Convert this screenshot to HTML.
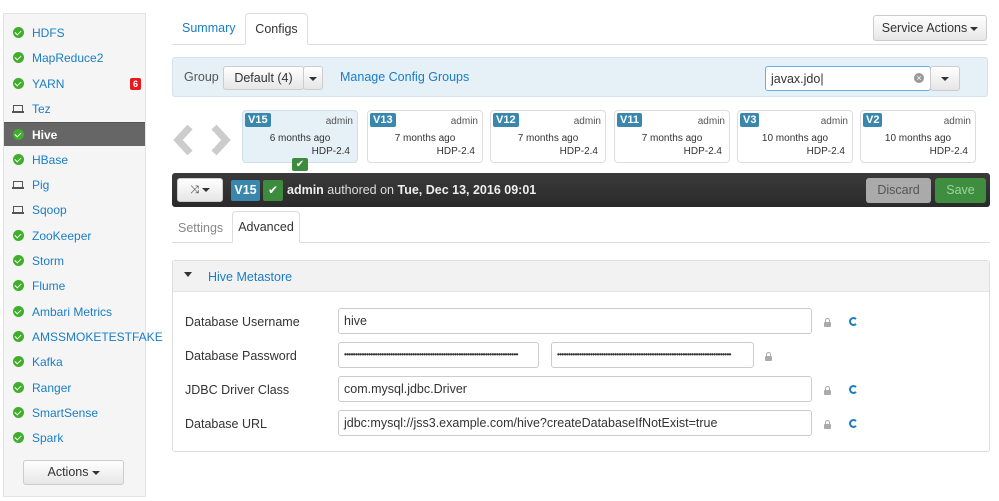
<!DOCTYPE html>
<html><head><style>
*{box-sizing:border-box;margin:0;padding:0}
body{width:999px;height:501px;background:#fff;font-family:"Liberation Sans",sans-serif;font-size:12px;color:#333;position:relative;overflow:hidden}
.a{position:absolute}
.side{left:3px;top:13px;width:143px;height:484px;background:#f5f5f5;border:1px solid #e3e3e3}
.it{position:absolute;left:0;width:141px;height:24px;line-height:24px;color:#1a7dc6;font-size:12px;padding-left:28px;white-space:nowrap}
.it .ok{position:absolute;left:9px;top:6px;width:11px;height:11px;border-radius:50%;background:#3fae29}
.it .ok:after{content:"";position:absolute;left:3px;top:2px;width:3px;height:5px;border:solid #fff;border-width:0 1.6px 1.6px 0;transform:rotate(45deg)}
.it .lp{position:absolute;left:8px;top:8px;width:12px;height:8px}
.it .lp:before{content:"";position:absolute;left:1px;top:0;width:8px;height:6px;border:1.3px solid #555}
.it .lp:after{content:"";position:absolute;left:0;top:6px;width:12px;height:1.5px;background:#555}
.btn{position:absolute;border:1px solid #ccc;border-radius:3px;background:linear-gradient(#fff,#e6e6e6);text-align:center;color:#333;font-size:12.5px}
.car{display:inline-block;width:0;height:0;border-left:4px solid transparent;border-right:4px solid transparent;border-top:4px solid #333;vertical-align:middle;margin-left:3px}
.ver{position:absolute;top:110px;width:116px;height:53px;border:1px solid #ddd;border-radius:4px;background:#fff;font-size:10px}
.ver .v{position:absolute;left:2px;top:2px;background:#3a87ad;color:#fff;font-weight:bold;font-size:11px;padding:1px 3px;border-radius:2px}
.ver .u{position:absolute;right:4px;top:5px;color:#555}
.ver .t{position:absolute;left:0;right:0;top:22px;text-align:center;color:#333}
.ver .h{position:absolute;right:7px;top:35px;color:#333}
.lbl{position:absolute;left:185px;font-size:12.5px;color:#333}
.inp{position:absolute;height:26px;border:1px solid #ccc;border-radius:3px;background:#fff;padding-left:5px;line-height:24px;font-size:12.5px;color:#333;white-space:nowrap}
.pw{overflow:hidden;font-size:8px;letter-spacing:-0.6px;font-weight:bold}
.lock{position:absolute;width:7px;height:5px;background:#aaa;border-radius:1px}
.lock:before{content:"";position:absolute;left:1px;top:-4px;width:3px;height:4px;border:1px solid #aaa;border-bottom:none;border-radius:3px 3px 0 0}
.ref{position:absolute;width:9px;height:9px;border:2px solid #1a7dc6;border-right-color:transparent;border-radius:50%}
</style></head><body>
<div class="a side">
<div class="it" style="top:7px"><span class="ok"></span>HDFS</div>
<div class="it" style="top:32px"><span class="ok"></span>MapReduce2</div>
<div class="it" style="top:58px"><span class="ok"></span>YARN<span style="position:absolute;left:126px;top:6px;width:11px;height:12px;background:#e8181e;color:#fff;font-size:9px;line-height:12px;text-align:center;border-radius:2px;font-weight:bold">6</span></div>
<div class="it" style="top:83px"><span class="lp"></span>Tez</div>
<div class="it" style="top:108px;background:#666;color:#fff;font-weight:bold;border-top:1px solid #555"><span class="ok"></span>Hive</div>
<div class="it" style="top:134px"><span class="ok"></span>HBase</div>
<div class="it" style="top:159px"><span class="lp"></span>Pig</div>
<div class="it" style="top:184px"><span class="lp"></span>Sqoop</div>
<div class="it" style="top:210px"><span class="ok"></span>ZooKeeper</div>
<div class="it" style="top:235px"><span class="ok"></span>Storm</div>
<div class="it" style="top:260px"><span class="ok"></span>Flume</div>
<div class="it" style="top:286px"><span class="ok"></span>Ambari Metrics</div>
<div class="it" style="top:311px;width:160px"><span class="ok"></span>AMSSMOKETESTFAKE</div>
<div class="it" style="top:336px"><span class="ok"></span>Kafka</div>
<div class="it" style="top:362px"><span class="ok"></span>Ranger</div>
<div class="it" style="top:387px"><span class="ok"></span>SmartSense</div>
<div class="it" style="top:412px"><span class="ok"></span>Spark</div>
</div>
<div class="btn" style="left:23px;top:460px;width:101px;height:25px;line-height:23px">Actions<span class="car"></span></div>

<div class="a" style="left:172px;top:44px;width:816px;height:1px;background:#ddd"></div>
<div class="a" style="left:182px;top:21px;color:#1a7dc6;font-size:12.5px">Summary</div>
<div class="a" style="left:245px;top:13px;width:63px;height:32px;border:1px solid #ddd;border-bottom:1px solid #fff;border-radius:4px 4px 0 0;background:#fff;text-align:center;line-height:30px;font-size:12.5px">Configs</div>
<div class="btn" style="left:873px;top:15px;width:114px;height:26px;line-height:24px">Service Actions<span class="car"></span></div>

<div class="a" style="left:172px;top:57px;width:816px;height:40px;background:#e5f0f7;border:1px solid #d4e3ee;border-radius:3px"></div>
<div class="a" style="left:184px;top:70px;color:#555;font-size:12.5px">Group</div>
<div class="btn" style="left:223px;top:66px;width:81px;height:24px;line-height:22px">Default (4)</div>
<div class="btn" style="left:303px;top:66px;width:20px;height:24px;line-height:22px"><span class="car" style="margin:0"></span></div>
<div class="a" style="left:340px;top:70px;color:#1a7dc6;font-size:12.5px">Manage Config Groups</div>
<div class="inp" style="left:765px;top:66px;width:166px;height:25px;border-color:#66afe9">javax.jdo|</div>
<div class="a" style="left:914px;top:73px;width:10px;height:10px;border-radius:50%;background:#999;color:#fff;font-size:9px;line-height:10px;text-align:center">×</div>
<div class="btn" style="left:930px;top:66px;width:30px;height:25px;line-height:23px"><span class="car" style="margin:0"></span></div>

<svg class="a" style="left:172px;top:123px" width="60" height="34"><path d="M18 4 L6 17 L18 30" stroke="#ccc" stroke-width="7" fill="none"/><path d="M42 4 L54 17 L42 30" stroke="#ccc" stroke-width="7" fill="none"/></svg>
<div class="ver" style="left:242px;background:#e5f0f7;border-color:#cfe0ea"><span class="v">V15</span><span class="u">admin</span><div class="t">6 months ago</div><span class="h">HDP-2.4</span></div>
<div class="a" style="left:292px;top:158px;width:16px;height:13px;background:#3d8b3d;border-radius:2px;color:#fff;font-size:10px;text-align:center;line-height:13px">✔</div>
<div class="ver" style="left:367px"><span class="v">V13</span><span class="u">admin</span><div class="t">7 months ago</div><span class="h">HDP-2.4</span></div>
<div class="ver" style="left:490px"><span class="v">V12</span><span class="u">admin</span><div class="t">7 months ago</div><span class="h">HDP-2.4</span></div>
<div class="ver" style="left:614px"><span class="v">V11</span><span class="u">admin</span><div class="t">7 months ago</div><span class="h">HDP-2.4</span></div>
<div class="ver" style="left:737px"><span class="v">V3</span><span class="u">admin</span><div class="t">10 months ago</div><span class="h">HDP-2.4</span></div>
<div class="ver" style="left:860px"><span class="v">V2</span><span class="u">admin</span><div class="t">10 months ago</div><span class="h">HDP-2.4</span></div>

<div class="a" style="left:172px;top:173px;width:818px;height:34px;background:linear-gradient(#3a3a3a,#2a2a2a);border-radius:3px"></div>
<div class="btn" style="left:177px;top:178px;width:46px;height:24px;line-height:22px;font-size:11px">⤨<span class="car"></span></div>
<div class="a" style="left:231px;top:180px;width:29px;height:21px;background:#3a87ad;color:#fff;font-weight:bold;font-size:12.5px;text-align:center;line-height:21px;border-radius:2px">V15</div>
<div class="a" style="left:263px;top:180px;width:20px;height:21px;background:#3d8b3d;color:#fff;text-align:center;line-height:21px;border-radius:2px">✔</div>
<div class="a" style="left:287px;top:183px;color:#ddd;font-size:12.5px"><b style="color:#eee">admin</b> authored on <b style="color:#eee">Tue, Dec 13, 2016 09:01</b></div>
<div class="a" style="left:866px;top:178px;width:65px;height:25px;background:#aaa;border-radius:3px;color:#555;text-align:center;line-height:25px;font-size:12.5px">Discard</div>
<div class="a" style="left:935px;top:178px;width:51px;height:25px;background:#3f8e3f;border-radius:3px;color:#9fd29f;text-align:center;line-height:25px;font-size:12.5px">Save</div>

<div class="a" style="left:172px;top:242px;width:818px;height:1px;background:#ddd"></div>
<div class="a" style="left:178px;top:221px;color:#888;font-size:12.5px">Settings</div>
<div class="a" style="left:232px;top:211px;width:68px;height:32px;border:1px solid #ddd;border-bottom:1px solid #fff;border-radius:4px 4px 0 0;background:#fff;text-align:center;line-height:30px;font-size:12.5px">Advanced</div>

<div class="a" style="left:172px;top:260px;width:818px;height:192px;border:1px solid #ddd;border-radius:3px"></div>
<div class="a" style="left:173px;top:261px;width:816px;height:31px;background:#f2f2f2;border-bottom:1px solid #e3e3e3"></div>
<div class="a" style="left:184px;top:272px;width:0;height:0;border-left:4px solid transparent;border-right:4px solid transparent;border-top:5px solid #333"></div>
<div class="a" style="left:208px;top:270px;color:#1a7dc6;font-size:12.5px">Hive Metastore</div>

<div class="lbl" style="top:315px">Database Username</div>
<div class="inp" style="left:338px;top:308px;width:474px">hive</div>
<div class="lbl" style="top:349px">Database Password</div>
<div class="inp pw" style="left:338px;top:342px;width:201px">•••••••••••••••••••••••••••••••••••••••••••••••••••••••••••••••••••••••••••••••</div>
<div class="inp pw" style="left:551px;top:342px;width:203px">•••••••••••••••••••••••••••••••••••••••••••••••••••••••••••••••••••••••••••••••</div>
<div class="lbl" style="top:383px">JDBC Driver Class</div>
<div class="inp" style="left:338px;top:376px;width:474px">com.mysql.jdbc.Driver</div>
<div class="lbl" style="top:417px">Database URL</div>
<div class="inp" style="left:338px;top:410px;width:474px">jdbc:mysql://jss3.example.com/hive?createDatabaseIfNotExist=true</div>

<div class="lock" style="left:824px;top:322px"></div><div class="ref" style="left:849px;top:317px"></div>
<div class="lock" style="left:765px;top:356px"></div>
<div class="lock" style="left:824px;top:390px"></div><div class="ref" style="left:849px;top:385px"></div>
<div class="lock" style="left:824px;top:424px"></div><div class="ref" style="left:849px;top:419px"></div>
</body></html>
